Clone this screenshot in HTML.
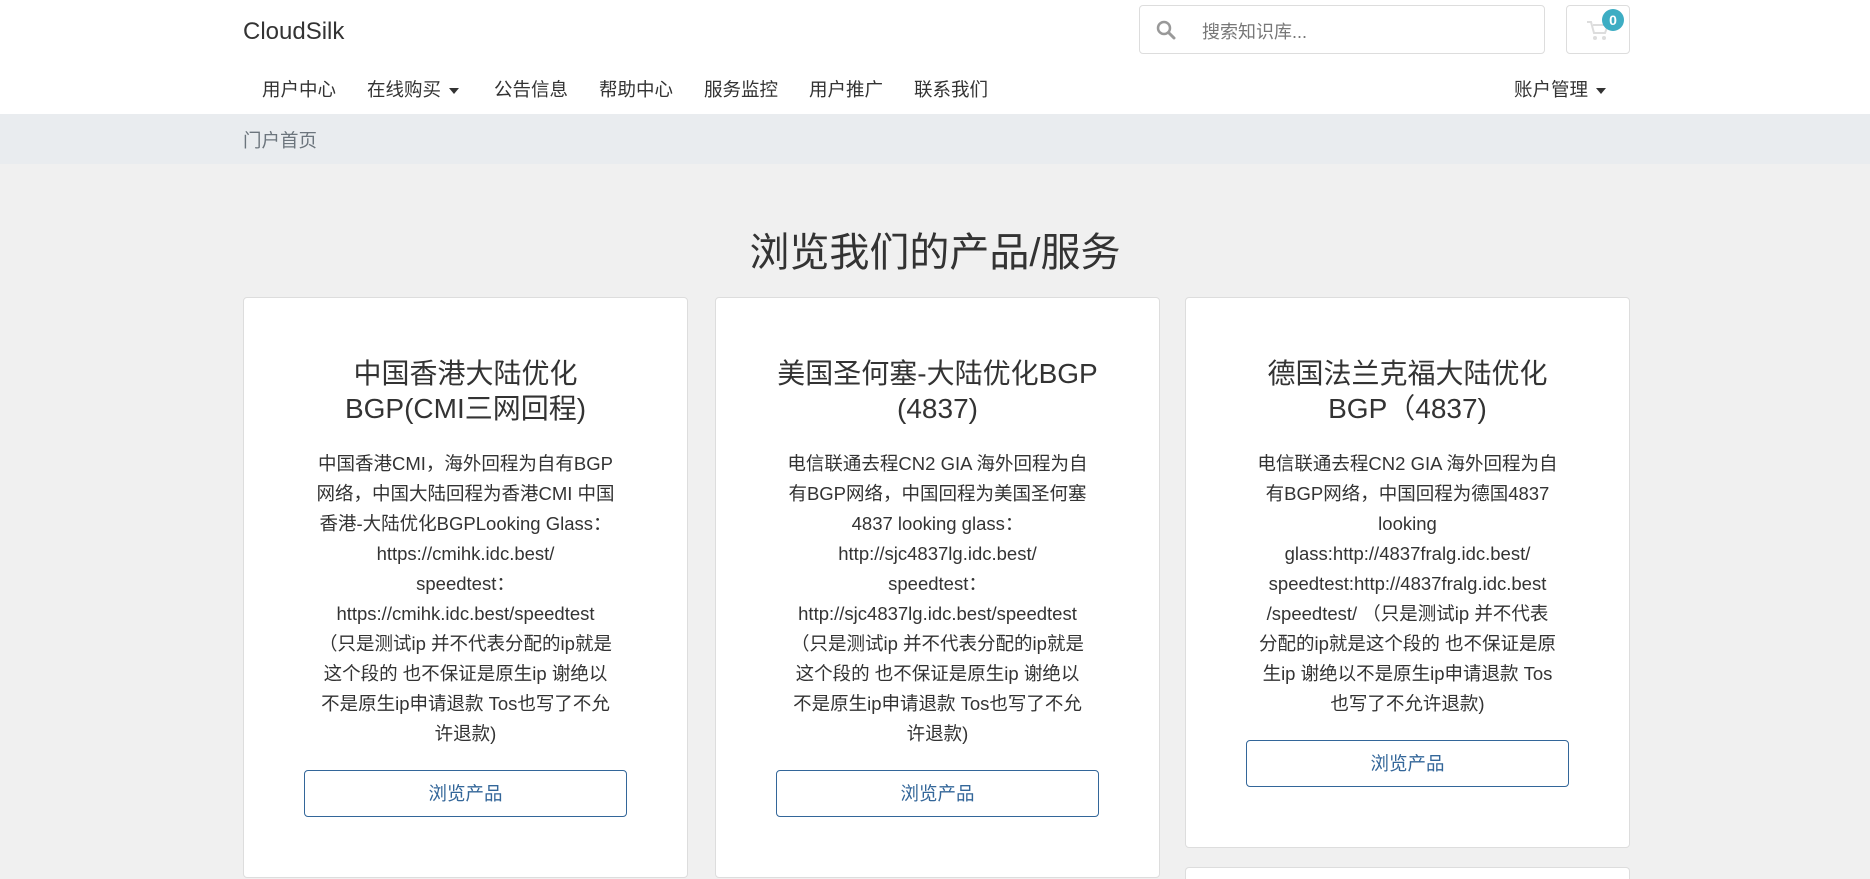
<!DOCTYPE html>
<html style="overflow:hidden;height:879px"><head><meta charset="utf-8"><style>
*{box-sizing:border-box;margin:0;padding:0}
body{width:1870px;height:879px;overflow:hidden;background:#f0f0f0;font-family:"Liberation Sans","Noto Sans CJK SC",sans-serif;color:#333;position:relative}
.top{position:absolute;left:0;top:0;width:1870px;height:114px;background:#fff}
.logo{position:absolute;left:243px;top:18px;font-size:24px;color:#333}
.search{position:absolute;left:1139px;top:5px;width:406px;height:49px;border:1px solid #ddd;border-radius:4px;background:#fff}
.search span{position:absolute;left:62px;top:12px;font-size:18px;color:#777}
.search svg{position:absolute;left:16px;top:14px}
.cart{position:absolute;left:1566px;top:5px;width:64px;height:49px;border:1px solid #ddd;border-radius:4px}
.badge{position:absolute;left:1602px;top:9px;width:22px;height:22px;border-radius:50%;background:#3dadc3;color:#fff;font-size:14px;font-weight:bold;text-align:center;line-height:22px}
.nav{position:absolute;top:76px;font-size:18.5px;color:#333;white-space:nowrap}
.caret{display:inline-block;width:0;height:0;border-left:5px solid transparent;border-right:5px solid transparent;border-top:6px solid #333;vertical-align:middle;margin-left:8px}
.crumb{position:absolute;left:0;top:114px;width:1870px;height:50px;background:#e9ecef}
.crumb span{position:absolute;left:243px;top:13px;font-size:18.5px;color:#6c757d}
h1{position:absolute;left:0;width:1870px;top:220px;text-align:center;font-size:40px;font-weight:normal;color:#333}
.card{position:absolute;top:297px;width:445px;background:#fff;border:1px solid #ddd;border-radius:4px;text-align:center;padding:58px 60px 60px}
.card h3{font-size:28px;font-weight:normal;line-height:35px;margin-bottom:23px;color:#333}
.card p{font-size:18.5px;line-height:30px;margin-bottom:21px;white-space:nowrap}
.btn{display:block;height:47px;border:1px solid #336699;border-radius:4px;color:#336699;font-size:18.5px;line-height:45px}
</style></head><body>
<div class="top"></div>
<div class="logo">CloudSilk</div>
<div class="search"><svg width="20" height="20" viewBox="0 0 20 20"><circle cx="8" cy="8" r="6" fill="none" stroke="#999" stroke-width="2.5"/><line x1="12.5" y1="12.5" x2="18" y2="18" stroke="#999" stroke-width="3" stroke-linecap="round"/></svg><span>搜索知识库...</span></div>
<div class="cart"><svg style="position:absolute;left:19px;top:14px" width="24" height="22" viewBox="0 0 24 22"><path d="M1 2h4l3 11h11l3-8H7" fill="none" stroke="#ddd" stroke-width="2"/><circle cx="9" cy="18" r="2" fill="#ddd"/><circle cx="18" cy="18" r="2" fill="#ddd"/></svg></div>
<div class="badge">0</div>
<div class="nav" style="left:262px">用户中心</div>
<div class="nav" style="left:367px">在线购买<span class="caret"></span></div>
<div class="nav" style="left:494px">公告信息</div>
<div class="nav" style="left:599px">帮助中心</div>
<div class="nav" style="left:704px">服务监控</div>
<div class="nav" style="left:809px">用户推广</div>
<div class="nav" style="left:914px">联系我们</div>
<div class="nav" style="left:1514px">账户管理<span class="caret"></span></div>
<div class="crumb"><span>门户首页</span></div>
<h1>浏览我们的产品/服务</h1>
<div class="card" style="left:243px"><h3>中国香港大陆优化<br>BGP(CMI三网回程)</h3><p>中国香港CMI，海外回程为自有BGP<br>网络，中国大陆回程为香港CMI 中国<br>香港-大陆优化BGPLooking Glass：<br>https://cmihk.idc.best/<br>speedtest：<br>https://cmihk.idc.best/speedtest<br>（只是测试ip 并不代表分配的ip就是<br>这个段的 也不保证是原生ip 谢绝以<br>不是原生ip申请退款 Tos也写了不允<br>许退款)</p><span class="btn">浏览产品</span></div>
<div class="card" style="left:715px"><h3>美国圣何塞-大陆优化BGP<br>(4837)</h3><p>电信联通去程CN2 GIA 海外回程为自<br>有BGP网络，中国回程为美国圣何塞<br>4837 looking glass：<br>http://sjc4837lg.idc.best/<br>speedtest：<br>http://sjc4837lg.idc.best/speedtest<br>（只是测试ip 并不代表分配的ip就是<br>这个段的 也不保证是原生ip 谢绝以<br>不是原生ip申请退款 Tos也写了不允<br>许退款)</p><span class="btn">浏览产品</span></div>
<div class="card" style="left:1185px"><h3>德国法兰克福大陆优化<br>BGP（4837)</h3><p>电信联通去程CN2 GIA 海外回程为自<br>有BGP网络，中国回程为德国4837<br>looking<br>glass:http://4837fralg.idc.best/<br>speedtest:http://4837fralg.idc.best<br>/speedtest/ （只是测试ip 并不代表<br>分配的ip就是这个段的 也不保证是原<br>生ip 谢绝以不是原生ip申请退款 Tos<br>也写了不允许退款)</p><span class="btn">浏览产品</span></div>
<div class="card" style="left:1185px;top:867px;height:12px;padding:0;border-bottom:none;border-radius:4px 4px 0 0"></div>
</body></html>
